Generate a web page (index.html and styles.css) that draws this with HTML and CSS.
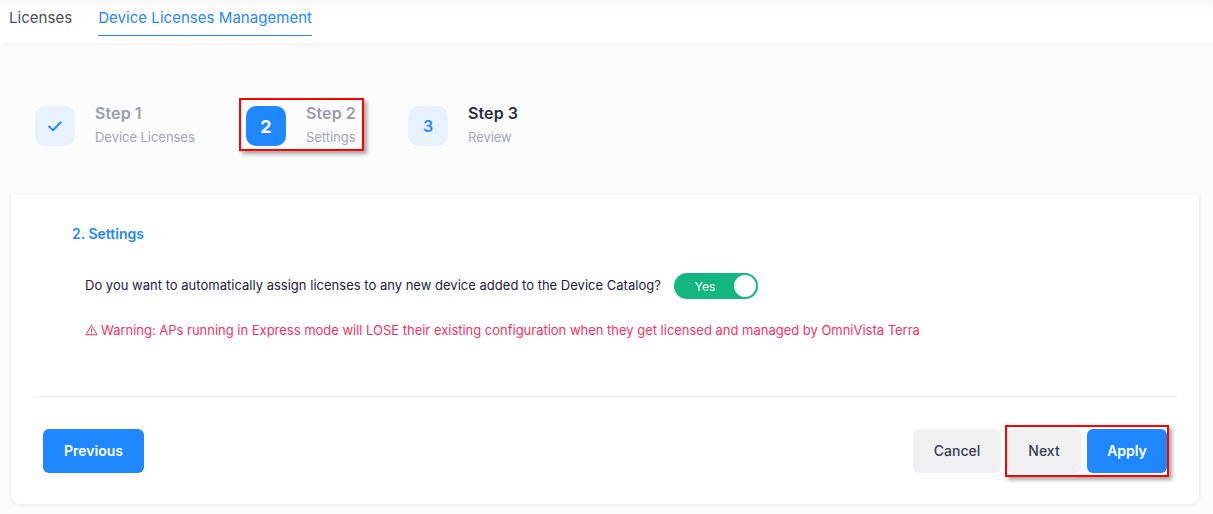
FILE: index.html
```html
<!DOCTYPE html>
<html lang="en">
<head>
  <meta charset="UTF-8" />
  <title>Device Licenses Management</title>
  <link rel="stylesheet" href="styles.css">
</head>
<body>

  <nav class="tabs">
    <a class="tab" href="#">Licenses</a>
    <a class="tab tab-active" href="#">Device Licenses Management</a>
  </nav>

  <div class="steps">
    <div class="step step-one">
      <div class="step-badge">
        <svg width="16" height="12" viewBox="0 0 16 12" fill="none"><path d="M1.5 6 L6 10.2 L14.2 1.8" stroke="#1f87ff" stroke-width="2"/></svg>
      </div>
      <div class="step-text">
        <div class="step-title step-title-done">Step 1</div>
        <div class="step-sub">Device Licenses</div>
      </div>
    </div>
    <div class="step step-two">
      <div class="step-badge step-badge-active">2</div>
      <div class="step-text">
        <div class="step-title step-title-done">Step 2</div>
        <div class="step-sub">Settings</div>
      </div>
      <div class="highlight highlight-step"></div>
    </div>
    <div class="step">
      <div class="step-badge">3</div>
      <div class="step-text">
        <div class="step-title">Step 3</div>
        <div class="step-sub">Review</div>
      </div>
    </div>
  </div>

  <div class="card">
    <div class="card-body">
      <h2 class="card-title">2. Settings</h2>
      <div class="question">
        <span class="question-text">Do you want to automatically assign licenses to any new device added to the Device Catalog?</span>
        <div class="switch">
          <span class="switch-label">Yes</span>
          <span class="switch-knob"></span>
        </div>
      </div>
      <p class="warning">
        <svg class="warning-icon" width="13" height="12" viewBox="0 0 13 12" fill="none"><path d="M6.5 1.2 L12 10.8 H1 Z M6.5 4.6 V8 M6.5 8.8 V9.8" stroke="#f9315f" stroke-width="1"/></svg>
        <span>Warning: APs running in Express mode will LOSE their existing configuration when they get licensed and managed by OmniVista Terra</span>
      </p>
    </div>
    <div class="card-footer">
      <button class="btn btn-primary btn-prev">Previous</button>
      <div class="footer-right">
        <button class="btn btn-grey btn-cancel">Cancel</button>
        <button class="btn btn-grey btn-next">Next</button>
        <button class="btn btn-primary btn-apply">Apply</button>
        <div class="highlight highlight-buttons"></div>
      </div>
    </div>
  </div>

</body>
</html>
```

FILE: styles.css
```css
* {
  margin: 0;
  padding: 0;
  box-sizing: border-box;
}
body {
  background: #fcfcfd;
  font-family: Inter, "Liberation Sans", sans-serif;
  height: 514px;
  overflow: hidden;
}
.tabs {
  display: flex;
  height: 43px;
  gap: 26px;
  padding-left: 9px;
  background: linear-gradient(to bottom, #f8f8f8, #ffffff 40%);
  box-shadow: 0 1px 6px rgba(0, 0, 0, 0.06);
}
.tab {
  height: 36px;
  padding-top: 9px;
  font-size: 15px;
  line-height: 18px;
  letter-spacing: 0.04px;
  color: #4b4d5c;
  text-decoration: none;
}
.tab-active {
  color: #1f87ff;
  border-bottom: 1px solid #1f87ff;
}
.steps {
  display: flex;
  padding: 63px 0 0 35px;
  height: 150px;
}
.step {
  display: flex;
  position: relative;
  height: 40px;
  gap: 20px;
}
.step-one {
  width: 211px;
}
.step-two {
  width: 162px;
}
.step-badge {
  width: 40px;
  height: 40px;
  border-radius: 10px;
  background: #e8f2ff;
  color: #1f87ff;
  display: flex;
  align-items: center;
  justify-content: center;
  font-size: 16px;
  font-weight: 600;
}
.step-badge-active {
  background: #1f87ff;
  color: #fff;
  font-size: 18px;
  font-weight: 700;
}
.step-title {
  font-size: 16px;
  line-height: 16px;
  font-weight: 600;
  letter-spacing: 0.1px;
  color: #2b2d42;
  margin-top: -1px;
  white-space: nowrap;
}
.step-title-done {
  color: #9a9caf;
}
.step-sub {
  font-size: 13px;
  line-height: 16px;
  margin-top: 8px;
  letter-spacing: -0.04px;
  color: #a2a5b9;
  white-space: nowrap;
}
.highlight {
  position: absolute;
  border: 2px solid #f00;
  box-shadow: 3px 3px 4px rgba(0, 0, 0, 0.35);
}
.highlight-step {
  left: -7px;
  top: -8px;
  width: 125px;
  height: 53px;
}
.card {
  margin: 0 13px 0 10px;
  height: 312px;
  background: #fff;
  border: 1px solid #f1f1f3;
  border-radius: 0 0 10px 10px;
  box-shadow: 0 1px 3px rgba(0, 0, 0, 0.05);
}
.card-body {
  height: 203px;
  margin: 0 22px 0 22px;
  padding: 31px 0 0 39px;
  border-bottom: 1px solid #eeeef0;
}
.card-title {
  font-size: 14px;
  line-height: 18px;
  font-weight: 600;
  color: #1f87ff;
}
.question {
  display: flex;
  align-items: flex-start;
  gap: 13px;
  margin: 30px 0 0 13px;
  font-size: 13px;
  letter-spacing: 0.012px;
  color: #1e2142;
}
.question-text {
  margin-top: 4px;
}
.switch {
  display: flex;
  align-items: center;
  justify-content: space-between;
  width: 84px;
  height: 26px;
  padding: 0 2px 0 21px;
  border-radius: 13px;
  background: #13b67f;
}
.switch-label {
  font-size: 12px;
  color: #fff;
}
.switch-knob {
  width: 22px;
  height: 22px;
  border-radius: 50%;
  background: #fff;
}
.warning {
  display: flex;
  align-items: center;
  gap: 3px;
  margin: 22px 0 0 13px;
  font-size: 13px;
  line-height: 18px;
  letter-spacing: -0.015px;
  color: #f9315f;
  white-space: nowrap;
}
.card-footer {
  display: flex;
  justify-content: space-between;
  padding: 32px 32px 0 32px;
}
.footer-right {
  display: flex;
  position: relative;
}
.btn {
  height: 44px;
  padding-bottom: 1px;
  border: none;
  border-radius: 6px;
  font-family: inherit;
  font-size: 14px;
  cursor: pointer;
}
.btn-primary {
  background: #1f87ff;
  color: #fff;
  font-weight: 600;
}
.btn-grey {
  background: #f0f0f3;
  color: #3b3d50;
  font-weight: 500;
}
.btn-prev {
  width: 101px;
}
.btn-cancel {
  width: 88px;
  margin-right: 6px;
}
.btn-next {
  width: 74px;
  margin-right: 6px;
}
.btn-apply {
  width: 80px;
}
.highlight-buttons {
  left: 92px;
  top: -4px;
  width: 164px;
  height: 52px;
}
```
